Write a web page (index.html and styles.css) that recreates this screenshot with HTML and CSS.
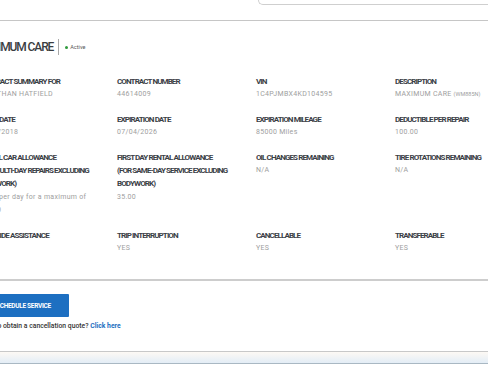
FILE: index.html
```html
<html lang="en">
<head>
    <meta charset="UTF-8">
    <meta name="viewport" content="width=device-width, initial-scale=1.0">
    <title>Contract detail</title>
    <link rel="stylesheet" href="styles.css">
</head>
<body>
    <div class="topbar">
        <div class="search"></div>
    </div>

    <div class="contract">
        <div class="title-row">
            <h2 class="title">MAXIMUM CARE</h2>
            <span class="status"><span class="dot"></span>Active</span>
        </div>

        <div class="details">
            <div class="item">
                <div class="label">CONTRACT SUMMARY FOR</div>
                <div class="value">JONATHAN HATFIELD</div>
            </div>
            <div class="item">
                <div class="label">CONTRACT NUMBER</div>
                <div class="value">44614009</div>
            </div>
            <div class="item">
                <div class="label">VIN</div>
                <div class="value">1C4PJMBX4KD104595</div>
            </div>
            <div class="item">
                <div class="label">DESCRIPTION</div>
                <div class="value">MAXIMUM CARE <span class="code">(WM885N)</span></div>
            </div>

            <div class="item">
                <div class="label">START DATE</div>
                <div class="value">05/04/2018</div>
            </div>
            <div class="item">
                <div class="label">EXPIRATION DATE</div>
                <div class="value">07/04/2026</div>
            </div>
            <div class="item">
                <div class="label">EXPIRATION MILEAGE</div>
                <div class="value">85000 Miles</div>
            </div>
            <div class="item">
                <div class="label">DEDUCTIBLE PER REPAIR</div>
                <div class="value">100.00</div>
            </div>

            <div class="item">
                <div class="label">RENTAL CAR ALLOWANCE <span class="note">(FOR MULTI-DAY REPAIRS EXCLUDING BODYWORK)</span></div>
                <div class="value">40.00 per day for a maximum of 200.00</div>
            </div>
            <div class="item">
                <div class="label">FIRST DAY RENTAL ALLOWANCE <span class="note">(FOR SAME-DAY SERVICE EXCLUDING BODYWORK)</span></div>
                <div class="value">35.00</div>
            </div>
            <div class="item">
                <div class="label">OIL CHANGES REMAINING</div>
                <div class="value">N/A</div>
            </div>
            <div class="item">
                <div class="label">TIRE ROTATIONS REMAINING</div>
                <div class="value">N/A</div>
            </div>

            <div class="item">
                <div class="label">ROADSIDE ASSISTANCE</div>
                <div class="value">YES</div>
            </div>
            <div class="item">
                <div class="label">TRIP INTERRUPTION</div>
                <div class="value">YES</div>
            </div>
            <div class="item">
                <div class="label">CANCELLABLE</div>
                <div class="value">YES</div>
            </div>
            <div class="item">
                <div class="label">TRANSFERABLE</div>
                <div class="value">YES</div>
            </div>
        </div>
    </div>

    <div class="actions">
        <button class="btn-primary">SCHEDULE SERVICE</button>
        <p class="cancel">Want to obtain a cancellation quote? <a href="#">Click here</a></p>
    </div>

    <div class="statusbar"></div>
</body>
</html>
```

FILE: styles.css
```css
body {
    margin: 0;
    background: #ffffff;
    font-family: Roboto, "Liberation Sans", sans-serif;
    overflow: hidden;
}

.topbar {
    height: 20px;
    border-bottom: 1px solid #c6c6c6;
}

.search {
    margin-left: 258px;
    height: 4px;
    border: 1px solid #cfcfcf;
    border-top: 0;
    border-right: 0;
    border-bottom-left-radius: 8px;
}

.contract {
    margin-left: -22px;
    padding-bottom: 24px;
    border-bottom: 2px solid #cdcdcd;
}

.title-row {
    display: flex;
    align-items: center;
    height: 16px;
    margin-top: 18px;
    margin-left: -3px;
}

.title {
    margin: 0;
    padding-right: 5px;
    border-right: 1px solid #a8a8a8;
    font-size: 12px;
    font-weight: 500;
    letter-spacing: -1.1px;
    line-height: 16px;
    color: #3a3d41;
}

.status {
    display: flex;
    align-items: center;
    margin-left: 6px;
    font-size: 5.5px;
    color: #555;
}

.dot {
    width: 3px;
    height: 3px;
    border-radius: 50%;
    background: #2e9a3c;
    margin-right: 2px;
}

.details {
    display: grid;
    grid-template-columns: repeat(4, 139px);
    row-gap: 11px;
    margin-top: 20px;
}

.item {
    padding-right: 12px;
    line-height: 13.4px;
}

.label {
    font-size: 8px;
    font-weight: 700;
    letter-spacing: -0.9px;
    color: #3b4046;
}

.note {
    display: block;
}

.value {
    font-size: 7px;
    letter-spacing: 0.3px;
    color: #9e9e9e;
}

.code {
    font-size: 5.5px;
    letter-spacing: 0;
}

.actions {
    margin-left: -22px;
    padding-top: 13px;
}

.btn-primary {
    display: block;
    height: 23px;
    padding: 0 18px;
    border: 0;
    border-radius: 1px;
    background: #1d6fc1;
    color: #ffffff;
    font-family: Roboto, sans-serif;
    font-size: 6.5px;
    font-weight: 700;
    letter-spacing: -0.3px;
}

.cancel {
    margin: 4px 0 0;
    font-size: 6.8px;
    line-height: 10px;
    font-weight: 500;
    color: #333;
}

.cancel a {
    color: #1d6fc1;
    text-decoration: none;
    font-weight: 700;
}

.statusbar {
    margin-top: 20px;
    height: 11px;
    border-top: 1px solid #c8c8c8;
    border-bottom: 1px solid #a9b8c3;
    background: linear-gradient(#fdf9f4, #e3edf6);
}
```
